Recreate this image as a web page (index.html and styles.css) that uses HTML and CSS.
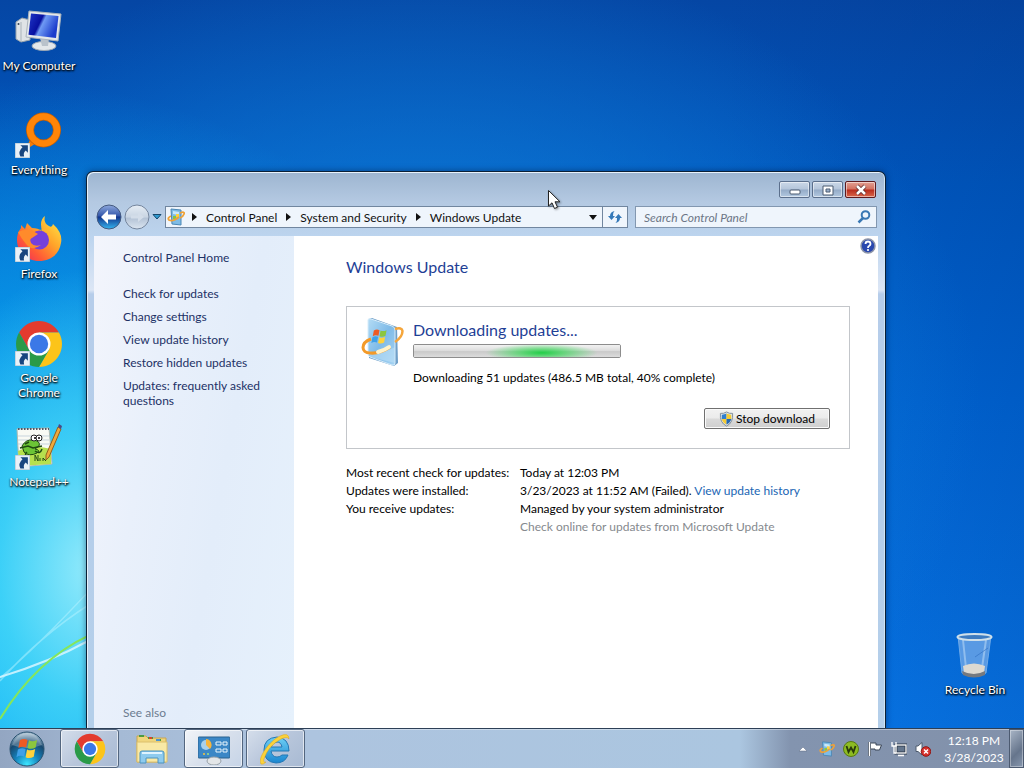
FILE: index.html
```html
<!DOCTYPE html>
<html lang="en">

<head>
	<meta charset="UTF-8">
	<meta name="viewport" content="width=device-width, initial-scale=1.0">
	<title>Windows Update</title>
	<link rel="stylesheet" href="styles.css">
</head>

<body>
	<!-- shared icons -->
	<svg class="defs" width="0" height="0" aria-hidden="true">
		<defs>
			<linearGradient id="gScreen" x1="0" y1="0" x2="1" y2=".4">
				<stop offset="0" stop-color="#2038c8" /><stop offset=".45" stop-color="#0710a0" /><stop offset=".55" stop-color="#6f9af4" /><stop offset="1" stop-color="#1b3ccc" />
			</linearGradient>
			<linearGradient id="gFox" x1="1" y1="0" x2="0" y2="1">
				<stop offset="0" stop-color="#fff04a" /><stop offset=".4" stop-color="#ffa52a" /><stop offset=".7" stop-color="#ff5a36" /><stop offset="1" stop-color="#e8206a" />
			</linearGradient>
			<radialGradient id="gOrb" cx=".5" cy=".95" r=".9">
				<stop offset="0" stop-color="#3ce6ff" /><stop offset=".4" stop-color="#1583bd" /><stop offset=".75" stop-color="#17486f" /><stop offset="1" stop-color="#9fb9cc" />
			</radialGradient>
			<linearGradient id="gBack" x1="0" y1="0" x2="0" y2="1">
				<stop offset="0" stop-color="#8ea8dc" /><stop offset=".45" stop-color="#3558ac" /><stop offset=".5" stop-color="#12348c" /><stop offset="1" stop-color="#35b6f0" />
			</linearGradient>
			<linearGradient id="gFwd" x1="0" y1="0" x2="0" y2="1">
				<stop offset="0" stop-color="#e6edf5" /><stop offset=".5" stop-color="#c9d5e3" /><stop offset=".55" stop-color="#b4c3d6" /><stop offset="1" stop-color="#dbe5f0" />
			</linearGradient>
			<linearGradient id="gBox" x1="0" y1="0" x2="1" y2="1">
				<stop offset="0" stop-color="#b4dcf5" /><stop offset=".5" stop-color="#7fbbe8" /><stop offset="1" stop-color="#a5d3f3" />
			</linearGradient>
			<linearGradient id="gIe" x1="0" y1="0" x2="0" y2="1">
				<stop offset="0" stop-color="#6fd0f5" /><stop offset="1" stop-color="#1a86d0" />
			</linearGradient>
		</defs>
		<symbol id="shortcut" viewBox="0 0 14 14">
			<rect width="14" height="14" fill="#e9f1f8" stroke="#a8bccb" />
			<path d="M5 2H12V9L10 7Q7.500 9 8.500 12.500H5Q2.500 8 7 4z" fill="#17457f" />
		</symbol>
		<symbol id="flag" viewBox="0 0 24 24">
			<path d="M4 3.500Q8 1 12 3L10.500 11Q6.500 9 2.500 11.500z" fill="#ee5a24" />
			<path d="M13.500 3.500Q17.500 5.500 22 3L20.500 11Q16 13.500 12 11.500z" fill="#8cc63e" />
			<path d="M2 13Q6 10.500 10 12.500L8.500 20.500Q4.500 18.500 .5 21z" fill="#3fa0e8" />
			<path d="M11.500 13Q15.500 15 20 12.500L18.500 20.500Q14 23 10 21z" fill="#ffd23c" />
		</symbol>
		<symbol id="chrome" viewBox="0 0 48 48">
			<path d="M24 12.500H43.900A23 23 0 0 0 4.100 12.500L14 29.800 24 24z" fill="#e33b2e" />
			<path d="M43.900 12.500A23 23 0 0 1 24 47L34 29.800 24 24V12.500z" fill="#fcc419" />
			<path d="M24 47A23 23 0 0 1 4.100 12.500L14 29.800 24 24 34 29.800z" fill="#2a9a48" />
			<circle cx="24" cy="24" r="11.500" fill="#fff" />
			<circle cx="24" cy="24" r="9.200" fill="#3b78e7" />
		</symbol>
		<symbol id="update" viewBox="0 0 44 50">
			<path d="M8 2L11 1 36 10 37 46 33 49 8 41z" fill="#6f9fc8" />
			<path d="M7 3Q7 1 10 2L31 9Q34 10 34 13V46Q34 49 31 48L9 40Q7 39 7 36z" fill="url(#gBox)" stroke="#d6ecfa" />
			<path d="M7 34Q20 38 34 30V46L9 40z" fill="#c4e4f8" opacity=".5" />
			<svg x="10" y="11" width="17" height="17" viewBox="0 0 24 24"><use href="#flag" /></svg>
			<path d="M34 12Q41 10 41.500 14Q41.500 20 34 25" fill="none" stroke="#f5a63c" stroke-width="2.500" />
			<path d="M10 22C-1 26 0 36 9 36Q19 37 29 30" fill="none" stroke="#f39a28" stroke-width="3" />
			<path d="M17 35Q24 33 28 30" stroke="#fff2c8" stroke-width="4" stroke-linecap="round" fill="none" />
		</symbol>
		<!-- simplified version for the 16px sizes -->
		<symbol id="update-small" viewBox="0 0 18 18">
			<path d="M4 1L14 2V17L5 16z" fill="#7fbce6" stroke="#4a86b4" />
			<path d="M6 3L12 4V7L6 6z" fill="#c8e8fa" />
			<rect x="6" y="8" width="3" height="3" fill="#8cc63e" /><rect x="9" y="6" width="3" height="3" fill="#ffd23c" />
			<path d="M4 8Q0 10 2 12Q6 14 12 9M13 5Q18 3 17 6Q16 9 13 10" fill="none" stroke="#f0a236" stroke-width="1.800" />
		</symbol>
		<symbol id="shield" viewBox="0 0 16 16">
			<path d="M8 .5Q11 2.500 14.500 2Q15.500 12 8 15.500Q.5 12 1.500 2Q5 2.500 8 .5z" fill="#dfe5ea" stroke="#7d8b98" />
			<path d="M8 2.200Q5.500 3.500 3 3.400L2.900 8H8z" fill="#2f7fd0" />
			<path d="M8 2.200Q10.500 3.500 13 3.400L13.100 8H8z" fill="#f6cc35" />
			<path d="M2.900 8H8v5.900Q3.800 12 2.900 8z" fill="#f6cc35" />
			<path d="M13.100 8H8v5.900Q12.200 12 13.100 8z" fill="#2468b4" />
		</symbol>
		<symbol id="crumb" viewBox="0 0 5 8">
			<path d="M0 0L5 4 0 8z" fill="#111" />
		</symbol>
	</svg>

	<main class="desktop">
		<!-- light streaks of the wallpaper -->
		<svg class="streaks" viewBox="0 0 90 158" aria-hidden="true">
			<path d="M0 111Q40 66 90 34M0 108Q36 78 90 20" stroke="#b8f4ff" stroke-width="1.500" fill="none" opacity=".5" />
			<path d="M0 107Q50 92 90 70" stroke="#d8f6ff" stroke-width="2" fill="none" opacity=".85" />
			<path d="M0 149Q36 90 90 65" stroke="#86e65a" stroke-width="2" fill="none" />
		</svg>

		<div class="icons">
			<button class="icon">
				<svg viewBox="0 0 48 48">
					<path d="M1 14L7 10 15 12V32L6 34 1 31z" fill="#dfe3e6" stroke="#9aa5ad" />
					<path d="M6 14V33" stroke="#aab3ba" />
					<circle cx="3.500" cy="16" r="1" fill="#345" />
					<ellipse cx="29" cy="38" rx="12" ry="4.500" fill="#e3e7ea" stroke="#9ba7b4" />
					<path d="M25 30H34L33 38H27z" fill="#b9c2cb" />
					<path d="M14 3L46 6 43 33 11 29z" fill="#e4e8ea" stroke="#a9b3bc" />
					<path d="M16 5.500L43.500 8 41 30 13.500 26.800z" fill="url(#gScreen)" />
				</svg>
				<span>My Computer</span>
			</button>
			<button class="icon">
				<svg viewBox="0 0 48 48">
					<path d="M17 24L23 30 15 35 13 32z" fill="#f27c08" />
					<circle cx="28.500" cy="18" r="13.500" fill="none" stroke="#c95f00" stroke-width="8" />
					<circle cx="28.500" cy="18" r="13.500" fill="none" stroke="#ff8508" stroke-width="6.500" />
					<use href="#shortcut" x="0" y="31" width="15" height="15" />
				</svg>
				<span>Everything</span>
			</button>
			<button class="icon">
				<svg viewBox="0 0 48 48">
					<path d="M30 0Q28 7 34 10Q37 12 38 8Q48 17 46 27C44 39 35 45 24 45S2 37 2 24Q2 17 6 12L6 9 10 13 12 7 17 12Q23 12 27 15Q24 4 30 0z" fill="url(#gFox)" />
					<circle cx="24.500" cy="24" r="9.500" fill="#7540dc" />
					<path d="M3 16Q9 13 16 14L23 18 17 22Q14 23 16 27Q19 31 26 29Q17 36 11 28Q6 22 3 16z" fill="#ff8b2b" />
					<path d="M24 14Q36 14 34 26Q38 18 31 13z" fill="#ffb62e" />
					<use href="#shortcut" x="0" y="31" width="15" height="15" />
				</svg>
				<span>Firefox</span>
			</button>
			<button class="icon">
				<svg viewBox="0 0 48 48">
					<use href="#chrome" width="48" height="48" />
					<use href="#shortcut" x="0" y="31" width="15" height="15" />
				</svg>
				<span>Google Chrome</span>
			</button>
			<button class="icon">
				<svg viewBox="0 0 48 48">
					<path d="M2 5L34 4 37 40 4 43z" fill="#f8faf4" stroke="#b3bab0" />
					<path d="M3 12H34M3 16H34M3 20H35" stroke="#c7d4dd" />
					<path d="M3 27Q18 20 36 25V40L5 42z" fill="#b6e04e" />
					<path d="M3 5H34" stroke="#556" stroke-width="2" stroke-dasharray="1.500 1.500" />
					<path d="M7 22Q11 15 18 16Q26 17 24 22L20 25Q26 26 22 29Q14 33 9 28z" fill="#6cc436" stroke="#1f4a12" />
					<path d="M5 24L13 22L18 24L27 22M10 20L14 18M12 28Q8 31 14 33M20 27Q25 31 27 25" stroke="#1f4a12" stroke-width="1.500" fill="none" />
					<circle cx="19" cy="14" r="3" fill="#fff" stroke="#222" /><circle cx="24" cy="14" r="3" fill="#fff" stroke="#222" />
					<circle cx="20" cy="14" r="1" /><circle cx="24" cy="14" r="1" />
					<path d="M20 37V31L23 37V31M25 37V34M28 37V34L31 37" stroke="#254d16" fill="none" />
					<path d="M43 3L46 5 34 33 31 36 31 31z" fill="#f0a93a" stroke="#91601f" />
					<path d="M43 3L44 0 47 2 46 5z" fill="#4b4a86" />
					<use href="#shortcut" x="0" y="31" width="15" height="15" />
				</svg>
				<span>Notepad++</span>
			</button>
		</div>

		<button class="icon bin">
			<svg viewBox="0 0 48 48">
				<path d="M7 4L11 41Q24 47 35 41L40 4z" fill="#86b5ec" opacity=".65" stroke="#a9cdf2" />
				<path d="M12 8L15 36M35 8L31 36" stroke="#c6e0f8" stroke-width="2" opacity=".5" fill="none" />
				<path d="M24 25L37 16" stroke="#2e6cc0" opacity=".6" />
				<path d="M12 34Q23 29 34 34L33 41Q23 45 13 41z" fill="#ddd9d1" />
				<path d="M11 39Q23 45 34 39V43Q23 48 12 43z" fill="#75797f" />
				<ellipse cx="23.500" cy="5" rx="17" ry="3" fill="#3d7bc0" stroke="#cfe0ea" stroke-width="2" />
			</svg>
			<span>Recycle Bin</span>
		</button>

		<section class="window" aria-label="Windows Update">
			<div class="titlebar">
				<button class="caption" aria-label="Minimize"><svg viewBox="0 0 16 12"><rect x="3" y="6" width="10" height="4" rx="1" fill="#fff" stroke="#4b5a70" /></svg></button>
				<button class="caption" aria-label="Maximize"><svg viewBox="0 0 16 12"><path fill-rule="evenodd" d="M3 2H13V11H3zM6 5V8H10V5z" fill="#fff" stroke="#4b5a70" /></svg></button>
				<button class="caption close" aria-label="Close"><svg viewBox="0 0 16 12"><path d="M4 2L12 10M12 2L4 10" stroke="#5c2a2a" stroke-width="4" /><path d="M4 2L12 10M12 2L4 10" stroke="#fff" stroke-width="2.500" /></svg></button>
			</div>

			<div class="toolbar">
				<div class="travel">
					<button aria-label="Back"><svg viewBox="0 0 26 26"><circle cx="13" cy="13" r="12" fill="url(#gBack)" stroke="#44597f" /><path d="M5 13L12 6V10.500H20V15.500H12V20z" fill="#fff" /></svg></button>
					<button aria-label="Forward"><svg viewBox="0 0 26 26"><circle cx="13" cy="13" r="12" fill="url(#gFwd)" stroke="#74859d" /><path d="M20 13L14 8V11.500H7V14.500H14V18z" fill="#d3dde9" /></svg></button>
					<button class="recent" aria-label="Recent pages"><svg viewBox="0 0 10 6"><path d="M1 .5H9L5 5z" fill="#2f9ad0" stroke="#17486d" /></svg></button>
				</div>
				<nav class="address" aria-label="Address">
					<svg class="address-icon"><use href="#update-small" /></svg>
					<svg class="sep"><use href="#crumb" /></svg>
					<a href="#">Control Panel</a>
					<svg class="sep"><use href="#crumb" /></svg>
					<a href="#">System and Security</a>
					<svg class="sep"><use href="#crumb" /></svg>
					<a href="#">Windows Update</a>
					<button class="drop" aria-label="Previous locations"><svg viewBox="0 0 8 5"><path d="M0 0H8L4 5z" fill="#111" /></svg></button>
					<button class="refresh" aria-label="Refresh"><svg viewBox="0 0 16 16"><path d="M1 7L4.500 11 8 7H6Q5.500 4 7.500 2Q3 3 3 7zM15 9L11.500 5 8 9H10Q10.500 12 8.500 14Q13 13 13 9z" fill="#3478b8" /></svg></button>
				</nav>
				<form class="search">
					<input type="search" placeholder="Search Control Panel" aria-label="Search Control Panel">
					<button type="button" aria-label="Search"><svg viewBox="0 0 14 14"><circle cx="8.500" cy="5" r="3.800" fill="none" stroke="#3a78b4" stroke-width="2" /><path d="M6 8L1.500 12.500" stroke="#3a78b4" stroke-width="2.500" /></svg></button>
				</form>
			</div>

			<div class="content">
				<aside class="sidebar">
					<a href="#" class="home">Control Panel Home</a>
					<a href="#">Check for updates</a>
					<a href="#">Change settings</a>
					<a href="#">View update history</a>
					<a href="#">Restore hidden updates</a>
					<a href="#">Updates: frequently asked questions</a>
					<span class="see-also">See also</span>
				</aside>

				<article class="page">
					<button class="help" aria-label="Help"><svg viewBox="0 0 16 16"><circle cx="8" cy="8" r="7" fill="#2a48ae" stroke="#8c94a8" stroke-width="1.500" /><path d="M5.500 6Q5.500 3.500 8 3.500T10.500 6Q10.500 7 9 8Q8 8.500 8 10" fill="none" stroke="#fff" stroke-width="1.800" /><circle cx="8" cy="12" r="1.100" fill="#fff" /></svg></button>
					<h1>Windows Update</h1>
					<div class="status">
						<svg class="status-icon"><use href="#update" /></svg>
						<div class="status-body">
							<h2 id="status">Downloading updates...</h2>
							<progress aria-labelledby="status" max="100" value="40"></progress>
							<p>Downloading 51 updates (486.5 MB total, 40% complete)</p>
							<button class="stop"><svg><use href="#shield" /></svg>Stop download</button>
						</div>
					</div>
					<dl class="info">
						<dt>Most recent check for updates:</dt>
						<dd>Today at 12:03 PM</dd>
						<dt>Updates were installed:</dt>
						<dd>3/23/2023 at 11:52 AM (Failed). <a href="#">View update history</a></dd>
						<dt>You receive updates:</dt>
						<dd>Managed by your system administrator</dd>
						<dd class="muted">Check online for updates from Microsoft Update</dd>
					</dl>
				</article>
			</div>
		</section>

		<svg class="cursor" viewBox="0 0 13 20" aria-hidden="true"><path d="M.5 .5V16L4 12.800 6.500 18.500 9.500 17.200 7 11.800H12z" fill="#fff" stroke="#222" /></svg>
	</main>

	<footer class="taskbar">
		<button class="start" aria-label="Start">
			<svg viewBox="0 0 36 36"><circle cx="18" cy="18" r="17" fill="url(#gOrb)" stroke="#27506e" /><path d="M3 14Q8 2 18 2T33 14Q18 20 3 14z" fill="#fff" opacity=".25" /><use href="#flag" x="7" y="6" width="23" height="23" /></svg>
		</button>
		<button class="task open" aria-label="Google Chrome"><svg><use href="#chrome" /></svg></button>
		<button class="task" aria-label="Windows Explorer">
			<svg viewBox="0 0 32 32">
				<path d="M1 3H10L12 5H30V29H1z" fill="#f0d67c" stroke="#c9a650" />
				<path d="M3 3H8M12 5H17M20 7H25" stroke="#4b9b41" stroke-width="2" /><path d="M13 5H16" stroke="#d8442c" stroke-width="2" /><path d="M20 7H24" stroke="#4a94cf" stroke-width="2" />
				<path d="M1 9H31V29H1z" fill="#f9e9a5" stroke="#dcc06c" />
				<path d="M4 30V20Q4 18 6 18H26Q28 18 28 20V30H22V25H10V30z" fill="#8ecbee" stroke="#4c93bf" />
				<path d="M6 20H26" stroke="#dff4ff" stroke-width="2" />
			</svg>
		</button>
		<button class="task open active" aria-label="Control Panel">
			<svg viewBox="0 0 32 32">
				<rect x="0" y="4" width="32" height="21" rx="1" fill="#3b87c6" stroke="#2a628f" />
				<circle cx="8" cy="12" r="5" fill="#a9d0ea" /><path d="M8 12V6A6 6 0 0 1 12 16z" fill="#f7b53c" />
				<path d="M18 9H23V12H18zM25 9H29V12H25zM18 16H23V19H18zM25 16H29V19H25z" fill="#3b87c6" stroke="#e9f5fc" />
				<circle cx="6" cy="21" r="1" fill="#f7c53c" /><circle cx="10" cy="21" r="1" fill="#9fe080" />
				<ellipse cx="16" cy="28" rx="7" ry="4" fill="#e3e6e8" stroke="#98a1a8" />
			</svg>
		</button>
		<button class="task open" aria-label="Internet Explorer">
			<svg viewBox="0 0 32 32">
				<path d="M29 18H11Q12 24 17 24Q20 24 22 22H28Q25 30 16 30Q4 29 4 17T17 4Q29 5 29 18zM11 14H22Q21 9 17 9T11 14z" fill="url(#gIe)" stroke="#2478b5" />
				<path d="M1 31C-3 26 9 8 20 3Q29 -1 29 6Q27 3 21 6Q8 13 4 26Q3 30 6 29Q3 32 1 31z" fill="#fbd23a" stroke="#d9a320" stroke-width=".5" />
			</svg>
		</button>

		<div class="tray">
			<button aria-label="Show hidden icons"><svg viewBox="0 0 16 16"><path d="M4 10L8 6 12 10z" fill="#fff" stroke="#5c6b82" stroke-width=".5" /></svg></button>
			<button aria-label="Windows Update"><svg><use href="#update-small" /></svg></button>
			<button aria-label="WU status"><svg viewBox="0 0 16 16"><circle cx="8" cy="8" r="7.500" fill="#8dbb22" stroke="#587a12" /><path d="M3.500 5L5.500 11 8 6.500 10.500 11 12.500 5" fill="none" stroke="#28390b" stroke-width="1.800" /></svg></button>
			<button aria-label="Action Center"><svg viewBox="0 0 16 16"><path d="M2.500 1V15" stroke="#3c4858" stroke-width="3" /><path d="M3.500 2H9V4H14.500L12.500 9H8V8H3.500z" fill="#fff" stroke="#3c4858" /><path d="M2.500 1V15" stroke="#fff" stroke-width="1.500" /></svg></button>
			<button aria-label="Network"><svg viewBox="0 0 16 16"><rect x="5" y="4" width="10" height="8" fill="#63758c" stroke="#2f3b4a" stroke-width="3" /><rect x="5" y="4" width="10" height="8" fill="none" stroke="#fff" stroke-width="1.300" /><path d="M7 14.500H13M1 1V5H5V1M3 5V12H5" stroke="#fff" stroke-width="1.300" fill="none" /></svg></button>
			<button aria-label="Volume muted"><svg viewBox="0 0 16 16"><path d="M1 5H3L7 1.500V14L3 10.500H1z" fill="#fff" stroke="#4c5a6c" /><circle cx="11" cy="10.500" r="4.800" fill="#d6302c" stroke="#8e1815" /><path d="M9 8.500L13 12.500M13 8.500L9 12.500" stroke="#fff" stroke-width="1.500" /></svg></button>
		</div>
		<button class="clock"><time datetime="2023-03-28T12:18">12:18 PM<br>3/28/2023</time></button>
		<button class="show-desktop" aria-label="Show desktop"></button>
	</footer>
</body>

</html>
```

FILE: styles.css
```css
* {
	box-sizing: border-box;
}

body {
	font-family: Lato, "Open Sans", sans-serif;
	font-size: 12px;
	line-height: 15px;
	margin: 0;
	height: 100vh;
	display: flex;
	flex-direction: column;
	overflow: hidden;
	color: #000;
}

button {
	font: inherit;
	color: inherit;
	padding: 0;
	border: none;
	background: none;
}

a {
	color: #1a66b4;
	text-decoration: none;
}

svg {
	display: block;
	flex: none;
}

.defs {
	position: absolute;
}

/* desktop */
.desktop {
	position: relative;
	flex: 1;
	min-height: 0;
	overflow: hidden;
	background:
		radial-gradient(ellipse 200px 300px at 90px 570px, rgba(160, 240, 252, 0.9) 0%, rgba(80, 220, 248, 0.7) 45%, rgba(16, 180, 245, 0) 100%),
		radial-gradient(ellipse 560px 540px at 0 620px, #10b8f8 0%, rgba(10, 175, 244, 0.85) 35%, rgba(8, 130, 230, 0) 100%),
		radial-gradient(ellipse 560px 460px at 420px 400px, #1284dc 0%, rgba(10, 104, 206, 0) 100%),
		linear-gradient(270deg, rgba(0, 50, 130, 0.2) 0, rgba(0, 60, 160, 0) 300px),
		linear-gradient(180deg, #0546a4 0%, #0058c0 25%, #0066d6 55%, #0878ea 100%);
}

.streaks {
	position: absolute;
	left: 0;
	bottom: 0;
	width: 90px;
	height: 158px;
}

.icons {
	display: flex;
	flex-direction: column;
	width: 78px;
}

.icon {
	display: flex;
	flex-direction: column;
	align-items: center;
	gap: 2px;
	height: 104px;
	padding-top: 8px;
	color: #fff;
	text-shadow: 1px 1px 2px #000, 0 1px 2px #000;
}

.icon svg {
	width: 48px;
	height: 48px;
}

.icon.bin {
	position: absolute;
	right: 10px;
	bottom: 0;
	width: 78px;
}

/* window */
.window {
	position: absolute;
	left: 86px;
	right: 138px;
	top: 171px;
	bottom: 0;
	display: flex;
	flex-direction: column;
	padding: 0 6px;
	border: 1px solid #0b2036;
	border-bottom: none;
	border-radius: 7px 7px 0 0;
	background: linear-gradient(180deg, #9db5d0 0, #b4c9e2 30px, #bcd4ee 64px, #dce6f5 118px, #b6cdea 122px, #b4cfea 100%);
	box-shadow: inset 1px 1px 0 #e8f2fb, inset -1px 0 0 #d0e4f4, 0 0 6px rgba(0, 20, 60, 0.5);
}

.titlebar {
	display: flex;
	justify-content: flex-end;
	gap: 2px;
	height: 32px;
	padding: 9px 3px 0;
}

.caption {
	display: flex;
	align-items: center;
	justify-content: center;
	width: 31px;
	height: 17px;
	border: 1px solid #5b6f8c;
	border-radius: 2px;
	background: linear-gradient(180deg, #cbd8e8 0%, #b4c5da 48%, #94abc7 52%, #b2c8e0 100%);
	box-shadow: inset 0 0 0 1px rgba(255, 255, 255, 0.5);
}

.caption svg {
	width: 16px;
	height: 12px;
}

.caption.close {
	border-color: #5d1a1f;
	background: linear-gradient(180deg, #e2a093 0%, #d2705f 48%, #b92b1c 52%, #d8664b 100%);
}

.toolbar {
	display: flex;
	align-items: center;
	gap: 7px;
	height: 32px;
	padding: 0 2px 6px 3px;
}

.travel {
	display: flex;
	align-items: center;
	gap: 2px;
}

.travel svg {
	width: 26px;
	height: 26px;
}

.travel .recent svg {
	width: 10px;
	height: 6px;
}

.address {
	display: flex;
	align-items: center;
	flex: 1;
	gap: 9px;
	height: 22px;
	margin-left: -4px;
	border: 1px solid #71869f;
	background: #eff5fc;
}

.address a {
	color: #111;
	white-space: nowrap;
}

.address-icon {
	width: 18px;
	height: 18px;
	margin: 0 -2px 0 1px;
}

.sep {
	width: 5px;
	height: 8px;
}

.drop {
	margin-left: auto;
	margin-right: -4px;
}

.drop svg {
	width: 8px;
	height: 5px;
}

.refresh {
	display: flex;
	align-items: center;
	justify-content: center;
	align-self: stretch;
	width: 25px;
	border-left: 1px solid #71869f;
}

.refresh svg {
	width: 16px;
	height: 16px;
}

.search {
	display: flex;
	align-items: center;
	width: 242px;
	height: 22px;
	padding-right: 5px;
	border: 1px solid #8297b0;
	background: #eff5fc;
}

.search input {
	flex: 1;
	min-width: 0;
	padding: 0 8px;
	border: none;
	outline: none;
	background: none;
	font: inherit;
	font-style: italic;
}

.search input::placeholder {
	color: #6c7586;
}

.search svg {
	width: 14px;
	height: 14px;
}

.content {
	display: flex;
	flex: 1;
	min-height: 0;
	margin: 0 1px;
	background: #fff;
}

/* left pane */
.sidebar {
	display: flex;
	flex-direction: column;
	gap: 8px;
	width: 200px;
	padding: 14px 24px 8px 29px;
	background: linear-gradient(100deg, #f3f5fc 0%, #e9f0fb 30%, #e3edfa 60%, #e6f1fc 100%);
}

.sidebar a {
	color: #1d3166;
}

.sidebar .home {
	margin-bottom: 13px;
}

.see-also {
	margin-top: auto;
	color: #6c7c90;
}

/* right pane */
.page {
	position: relative;
	flex: 1;
	padding: 21px 28px 0 52px;
}

.help {
	position: absolute;
	top: 2px;
	right: 2px;
}

.help svg {
	width: 16px;
	height: 16px;
}

h1,
h2 {
	margin: 0;
	font-size: 16px;
	line-height: 20px;
	font-weight: 400;
	color: #1f3f96;
}

.status {
	display: flex;
	gap: 8px;
	margin-top: 29px;
	padding: 10px 19px 19px 14px;
	border: 1px solid #c3c6ca;
}

.status-icon {
	width: 44px;
	height: 50px;
}

.status-body {
	display: flex;
	flex-direction: column;
	flex: 1;
	padding-top: 3px;
}

progress {
	appearance: none;
	width: 208px;
	height: 14px;
	margin-top: 4px;
	border: 1px solid #8d8d8d;
	border-radius: 2px;
	overflow: hidden;
}

progress::-webkit-progress-bar {
	background:
		radial-gradient(ellipse 56px 9px at 62% 65%, #22cf48 0%, rgba(60, 214, 90, 0.7) 40%, rgba(120, 230, 140, 0) 100%),
		linear-gradient(180deg, #f2f2f2 0%, #dedede 45%, #cacaca 55%, #dcdcdc 100%);
}

progress::-webkit-progress-value {
	background: transparent;
}

.status-body p {
	margin: 12px 0 23px;
}

.stop {
	display: flex;
	align-items: center;
	justify-content: center;
	gap: 2px;
	align-self: flex-end;
	width: 126px;
	height: 21px;
	border: 1px solid #707070;
	border-radius: 2px;
	background: linear-gradient(180deg, #f2f2f2 0%, #ebebeb 48%, #dadada 52%, #cfcfcf 100%);
	box-shadow: inset 0 0 0 1px #fafafa;
}

.stop svg {
	width: 15px;
	height: 16px;
}

.info {
	display: grid;
	grid-template-columns: 174px 1fr;
	margin: 15px 0 0;
	line-height: 18px;
	white-space: nowrap;
}

.info dd {
	grid-column: 2;
	margin: 0;
}

.info .muted {
	color: #85898e;
}

.cursor {
	position: absolute;
	left: 548px;
	top: 190px;
	width: 13px;
	height: 20px;
	filter: drop-shadow(1px 1px 1px rgba(0, 0, 0, 0.4));
}

/* taskbar */
.taskbar {
	display: flex;
	align-items: stretch;
	gap: 3px;
	height: 40px;
	padding-left: 9px;
	border-top: 1px solid #2d3f56;
	background: linear-gradient(90deg, #93a6c2 0, #a5bad5 120px, #adc4df 310px, #abc6e0 740px, #8394af 790px, #8291aa 100%);
	box-shadow: inset 0 1px 0 rgba(255, 255, 255, 0.4);
}

.start {
	display: flex;
	align-items: center;
	width: 36px;
	margin-right: 12px;
}

.start svg {
	width: 36px;
	height: 36px;
}

.task {
	display: flex;
	align-items: center;
	justify-content: center;
	width: 59px;
	border: 1px solid transparent;
	border-radius: 3px;
}

.task svg {
	width: 32px;
	height: 32px;
}

.task.open {
	border-color: #53667f;
	background: linear-gradient(135deg, #d5deeb 0%, #b8c6db 50%, #a8bad3 100%);
	box-shadow: inset 0 0 0 1px rgba(255, 255, 255, 0.6);
}

.task.active {
	background: linear-gradient(135deg, #f2f5f9 0%, #d8e0ec 50%, #c6d4e7 100%);
}

.tray {
	display: flex;
	align-items: center;
	gap: 8px;
	margin-left: auto;
}

.tray svg {
	width: 16px;
	height: 16px;
}

.clock {
	width: 72px;
	padding-left: 8px;
	color: #fff;
	line-height: 17px;
	text-align: center;
}

.show-desktop {
	width: 15px;
	border: 1px solid #4c5a70;
	background: linear-gradient(135deg, #a9b5c6 0%, #66758c 60%, #8797ae 100%);
	box-shadow: inset 0 0 0 1px rgba(255, 255, 255, 0.35);
}
```
